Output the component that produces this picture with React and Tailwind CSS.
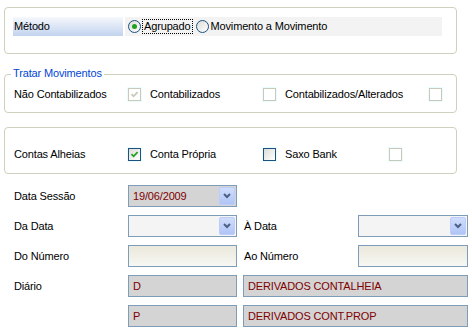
import React from 'react';

const font = { fontFamily: '"Liberation Sans", Arial, sans-serif' };

const Radio = ({ checked }) => (
  <span className="flex h-[13px] w-[13px] shrink-0 items-center justify-center rounded-full border border-[#1c5180] bg-gradient-to-br from-[#dcdcd7] to-white">
    {checked && <span className="h-[5px] w-[5px] rounded-full bg-[#21a121]" />}
  </span>
);

const Check = ({ checked, disabled }) => (
  <span className="flex h-[15px] w-[15px] shrink-0 items-center justify-center bg-[#e9fdfe]">
    <span
      className={
        disabled
          ? 'flex h-[13px] w-[13px] items-center justify-center border border-[#cac8bb] bg-white'
          : 'flex h-[13px] w-[13px] items-center justify-center border border-[#1c5180] bg-gradient-to-br from-[#dcdcd7] to-white'
      }
    >
      {checked && (
        <svg width="9" height="9" viewBox="0 0 9 9">
          <path
            d="M1.5 4.2 L3.6 6.3 L7.6 2.2"
            fill="none"
            stroke={disabled ? '#cac8bb' : '#21a121'}
            strokeWidth="1.8"
          />
        </svg>
      )}
    </span>
  </span>
);

const ComboButton = () => (
  <span className="m-[1px] flex h-[18px] w-[16px] shrink-0 items-center justify-center rounded-[2px] border border-[#bccdf9] bg-gradient-to-b from-[#d0dcfc] to-[#b0c5f6]">
    <svg width="8" height="6" viewBox="0 0 8 6">
      <path d="M1 1 L4 4 L7 1" fill="none" stroke="#4d6185" strokeWidth="2" />
    </svg>
  </span>
);

const Combo = ({ value, gray, width }) => (
  <div
    className={`flex h-[22px] items-center border border-[#7f9db9] ${gray ? 'bg-[#d4d4d4]' : 'bg-[#f4f4f4]'} ${width}`}
  >
    <span className="flex-1 pl-[4px] text-[#800000]">{value}</span>
    <ComboButton />
  </div>
);

const Field = ({ value, width, beige }) => (
  <div
    className={`flex h-[22px] items-center border border-[#7f9db9] pl-[4px] text-[#800000] ${
      beige ? 'bg-gradient-to-b from-[#ebe9dc] to-[#f7f7f3]' : 'bg-[#d4d4d4]'
    } ${width}`}
  >
    {value}
  </div>
);

export default function App() {
  return (
    <div
      className="h-[333px] w-[472px] overflow-hidden bg-white text-[11px] leading-[13px] tracking-[-0.15px] text-black"
      style={font}
    >
      {/* Método */}
      <div className="ml-[4px] mt-[7px] h-[47px] w-[453px] rounded-[4px] border border-[#d0d0bf] pl-[8px] pt-[9px]">
        <div className="flex h-[19px] items-center">
          <div className="flex h-[19px] w-[110px] items-center bg-gradient-to-b from-[#f6f8fc] to-[#c2d3ee] pl-[1px]">
            Método
          </div>
          <div className="ml-[2px] flex h-[19px] w-[317px] items-center bg-[#f3f3f3] pl-[3px]">
            <Radio checked />
            <span className="ml-[1px] border border-dotted border-black px-[1px]">Agrupado</span>
            <span className="ml-[3px]"><Radio /></span>
            <span className="ml-[2px]">Movimento a Movimento</span>
          </div>
        </div>
      </div>

      {/* Tratar Movimentos */}
      <div className="relative ml-[4px] mt-[20px] h-[39px] w-[453px] rounded-[4px] border border-[#d0d0bf]">
        <span className="absolute left-[6px] top-[-8px] bg-white px-[2px] text-[#0046d5]">Tratar Movimentos</span>
        <div className="flex h-full items-center pl-[9px] pt-[2px]">
          <span className="w-[113px]">Não Contabilizados</span>
          <Check checked disabled />
          <span className="ml-[8px] w-[112px]">Contabilizados</span>
          <Check disabled />
          <span className="ml-[8px] w-[143px]">Contabilizados/Alterados</span>
          <Check disabled />
        </div>
      </div>

      {/* Contas */}
      <div className="ml-[4px] mt-[14px] h-[47px] w-[453px] rounded-[4px] border border-[#d0d0bf]">
        <div className="flex h-full items-center pl-[9px] pt-[8px]">
          <span className="w-[113px]">Contas Alheias</span>
          <Check checked />
          <span className="ml-[8px] w-[112px]">Conta Própria</span>
          <Check />
          <span className="ml-[8px] w-[103px]">Saxo Bank</span>
          <Check disabled />
        </div>
      </div>

      {/* Form */}
      <div className="mt-[11px] flex flex-col gap-[8px] pl-[14px]">
        <div className="flex items-center">
          <span className="w-[114px]">Data Sessão</span>
          <Combo value="19/06/2009" gray width="w-[109px]" />
        </div>
        <div className="flex items-center">
          <span className="w-[114px]">Da Data</span>
          <Combo width="w-[109px]" />
          <span className="ml-[7px] w-[114px]">À Data</span>
          <Combo width="w-[110px]" />
        </div>
        <div className="flex items-center">
          <span className="w-[114px]">Do Número</span>
          <Field beige width="w-[109px]" />
          <span className="ml-[7px] w-[114px]">Ao Número</span>
          <Field beige width="w-[110px]" />
        </div>
        <div className="flex items-center">
          <span className="w-[114px]">Diário</span>
          <Field value="D" width="w-[109px]" />
          <div className="ml-[6px]">
            <Field value="DERIVADOS CONTALHEIA" width="w-[225px]" />
          </div>
        </div>
        <div className="flex items-center">
          <span className="w-[114px]" />
          <Field value="P" width="w-[109px]" />
          <div className="ml-[6px]">
            <Field value="DERIVADOS CONT.PROP" width="w-[225px]" />
          </div>
        </div>
      </div>
    </div>
  );
}
